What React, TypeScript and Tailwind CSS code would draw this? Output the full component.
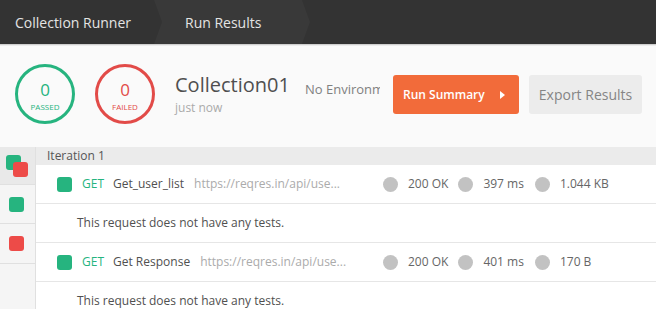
import React from "react";

function Circle({ color, label }: { color: "green" | "red"; label: string }) {
  const green = color === "green";
  return (
    <div
      className={
        "w-[60px] h-[60px] rounded-full border-[3px] flex flex-col items-center shrink-0 " +
        (green ? "border-[#26b47f]" : "border-[#e24b48]")
      }
    >
      <div
        className={
          "mt-[13px] text-[17px] leading-[20px] " + (green ? "text-[#26b47f]" : "text-[#e24b48]")
        }
      >
        0
      </div>
      <div
        className={
          "mt-[2px] text-[8px] leading-[10px] " + (green ? "text-[#26b47f]" : "text-[#e24b48]")
        }
      >
        {label}
      </div>
    </div>
  );
}

function Stat({ text }: { text: string }) {
  return (
    <div className="flex items-center">
      <div className="w-[15px] h-[15px] rounded-full bg-[#c2c2c2]" />
      <div className="ml-[10px] text-[12px] text-[#666666] whitespace-nowrap">{text}</div>
    </div>
  );
}

function RequestRow({
  name,
  url,
  stats,
}: {
  name: string;
  url: string;
  stats: string[];
}) {
  return (
    <div className="h-[39px] border-b border-[#e6e6e6] bg-white flex items-center">
      <div className="w-[343px] pl-[21px] flex items-center overflow-hidden whitespace-nowrap">
        <div className="w-[15px] h-[15px] rounded-[3px] bg-[#26b47f] shrink-0" />
        <div className="ml-[10px] text-[12px] text-[#26b47f]">GET</div>
        <div className="ml-[9px] text-[12px] text-[#505050]">{name}</div>
        <div className="ml-[10px] text-[12px] text-[#ababab]">{url}</div>
      </div>
      <div className="ml-[4px] flex items-center gap-[10px]">
        <Stat text={stats[0]} />
        <Stat text={stats[1]} />
        <div className="ml-[1px]">
          <Stat text={stats[2]} />
        </div>
      </div>
    </div>
  );
}

function TestRow() {
  return (
    <div className="h-[39px] border-b border-[#e6e6e6] bg-white flex items-center pl-[41px]">
      <div className="text-[12px] text-[#505050]">This request does not have any tests.</div>
    </div>
  );
}

export default function App() {
  return (
    <div className="w-[656px] h-[309px] overflow-hidden bg-[#fafafa] flex flex-col font-['Open_Sans',sans-serif]">
      {/* Header */}
      <div className="h-[44px] bg-[#333333] flex items-stretch shrink-0">
        <div className="w-[160px] pl-[15px] flex items-center text-[14px] text-[#e4e4e4] whitespace-nowrap">
          Collection Runner
        </div>
        <div className="-ml-[6px] w-[156px] pl-[31px] flex items-center text-[14px] text-[#e4e4e4] bg-[#393939] whitespace-nowrap [clip-path:polygon(0_0,calc(100%_-_8px)_0,100%_50%,calc(100%_-_8px)_100%,0_100%,8px_50%)]">
          Run Results
        </div>
      </div>
      <div className="h-[1px] bg-[#cfcfcf] shrink-0" />
      <div className="h-[1px] bg-[#ececec] shrink-0" />

      {/* Summary */}
      <div className="h-[101px] shrink-0 flex items-start pl-[15px] pt-[18px]">
        <Circle color="green" label="PASSED" />
        <div className="ml-[20px]">
          <Circle color="red" label="FAILED" />
        </div>
        <div className="ml-[20px] mt-[8px] w-[130px] shrink-0">
          <div className="text-[20px] leading-[26px] text-[#4f4f4f] whitespace-nowrap">Collection01</div>
          <div className="mt-[2px] text-[12px] leading-[16px] text-[#aaaaaa]">just now</div>
        </div>
        <div className="mt-[16px] w-[75px] overflow-hidden whitespace-nowrap text-[13px] leading-[18px] text-[#808080] shrink-0">
          No Environment
        </div>
        <div className="ml-[13px] mt-[11px] w-[126px] h-[39px] rounded-[3px] bg-[#f26b3a] flex items-center pl-[10px] shrink-0">
          <span className="text-[12px] font-semibold text-white whitespace-nowrap">Run Summary</span>
          <svg className="ml-auto mr-[14px]" width="5" height="8" viewBox="0 0 5 8">
            <path d="M0 0 L5 4 L0 8 Z" fill="#ffffff" />
          </svg>
        </div>
        <div className="ml-[10px] mt-[11px] w-[113px] h-[39px] rounded-[3px] bg-[#ececec] flex items-center justify-center shrink-0">
          <span className="text-[14px] text-[#858585] whitespace-nowrap">Export Results</span>
        </div>
      </div>

      {/* Body */}
      <div className="flex-1 flex">
        <div className="w-[36px] shrink-0 bg-[#f5f5f5] border-r border-[#e0e0e0] flex flex-col">
          <div className="h-[38px] bg-[#e9e9e9] border-b border-[#e0e0e0] relative">
            <div className="absolute left-[6px] top-[8px] w-[15px] h-[15px] rounded-[3px] bg-[#26b47f]" />
            <div className="absolute left-[13px] top-[15px] w-[15px] h-[15px] rounded-[3px] bg-[#ed4b48]" />
          </div>
          <div className="h-[39px] border-b border-[#e0e0e0] flex items-center pl-[9px]">
            <div className="w-[15px] h-[15px] rounded-[3px] bg-[#26b47f]" />
          </div>
          <div className="h-[40px] border-b border-[#e0e0e0] flex items-center pl-[9px]">
            <div className="w-[15px] h-[15px] rounded-[3px] bg-[#ed4b48]" />
          </div>
        </div>
        <div className="flex-1 flex flex-col bg-white">
          <div className="h-[18px] bg-[#ebebeb] flex items-center pl-[11px]">
            <span className="text-[12px] text-[#555555]">Iteration 1</span>
          </div>
          <RequestRow
            name="Get_user_list"
            url="https://reqres.in/api/use..."
            stats={["200 OK", "397 ms", "1.044 KB"]}
          />
          <TestRow />
          <RequestRow
            name="Get Response"
            url="https://reqres.in/api/use..."
            stats={["200 OK", "401 ms", "170 B"]}
          />
          <TestRow />
        </div>
      </div>
    </div>
  );
}
